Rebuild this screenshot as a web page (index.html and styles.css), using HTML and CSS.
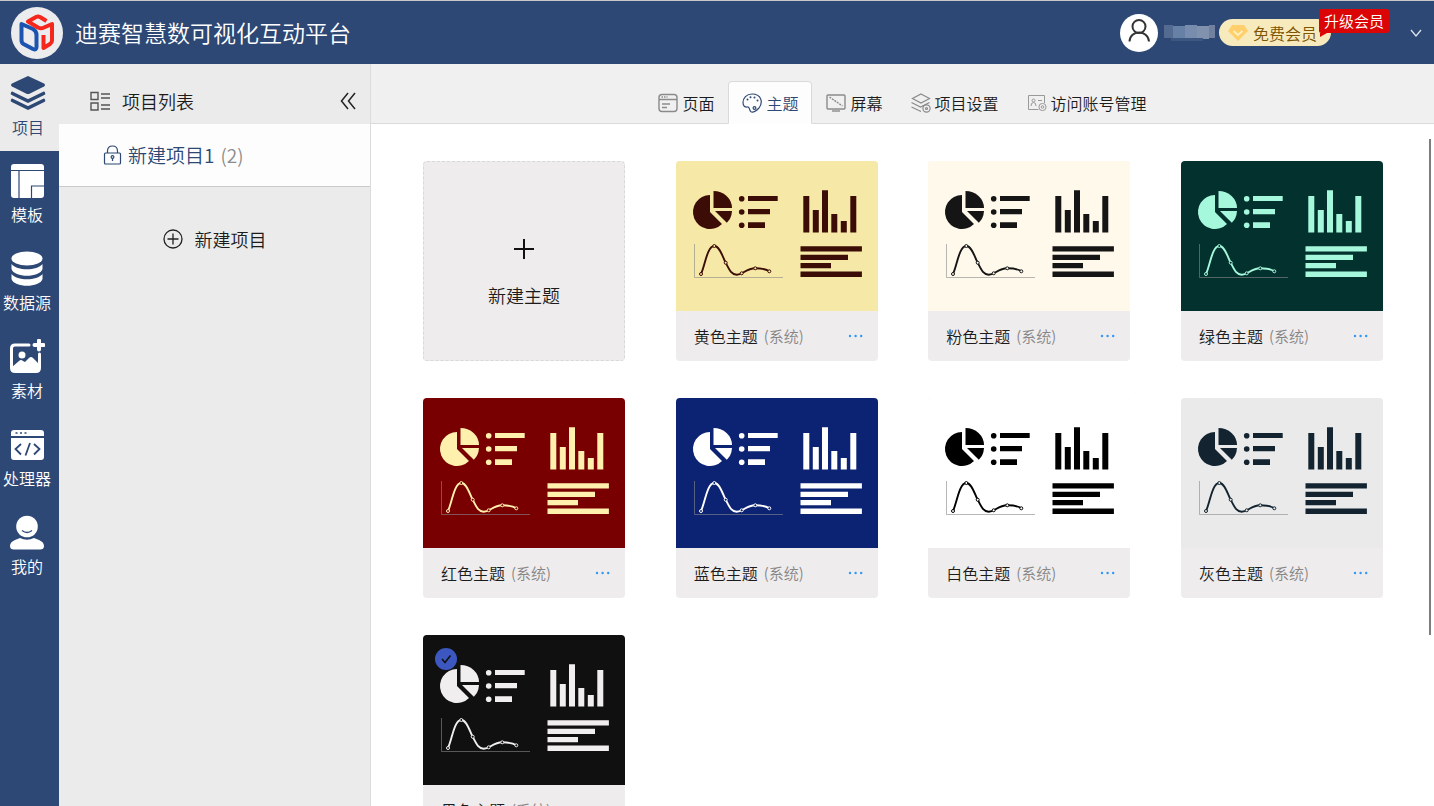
FILE: index.html
```html
<!DOCTYPE html>
<html lang="zh-CN">
<head>
<meta charset="utf-8">
<title>迪赛智慧数可视化互动平台</title>
<link rel="stylesheet" href="styles.css">
</head>
<body>
<svg class="defs" aria-hidden="true">
  <symbol id="charts" viewBox="0 0 202 150">
    <g fill="currentColor">
      <path d="M34 51V34A17 17 0 1 0 46 63Z"/>
      <path d="M37.500 47V30A18.500 17 0 0 1 56 47Z"/>
      <path d="M39 50H56Q55.500 57.500 50.800 61.700Z"/>
      <circle cx="65.700" cy="37.700" r="2.800"/><circle cx="65.700" cy="51" r="2.800"/><circle cx="65.700" cy="64.300" r="2.800"/>
      <path d="M72 35h29.700v5H72zM72 48h22v5.300H72zM72 61.300h17V67H72z"/>
      <path d="M127.300 35h6v36.500h-6zM136.800 49h6v22.500h-6zM146 29.300h6v42.200h-6zM155.300 53h6v18.500h-6zM164.800 60h6v11.500h-6zM174.300 35h6v36.500h-6z"/>
      <path d="M124.500 85.300h61.400v5.200h-61.400zM124.500 93.700H172v5.200h-47.500zM124.500 102H155v5.200h-30.500zM124.500 110.500h61.400v5.500h-61.400z"/>
    </g>
    <path d="M18.500 83v33.500H107" fill="none" stroke="#888" stroke-opacity=".6"/>
    <path d="M25 113C29 105 31 85 38.300 85C44 85 47 97 49.700 101.700C53 108 55 113.700 60.700 113.700C67 113.700 70 107.300 79.300 107.300C85 107.300 90 108 93.300 110.300" fill="none" stroke="currentColor" stroke-width="1.900"/>
    <g class="points"><circle cx="25" cy="113" r="1.500"/><circle cx="38.300" cy="85" r="1.500"/><circle cx="49.700" cy="101.700" r="1.500"/><circle cx="65.700" cy="112.300" r="1.500"/><circle cx="79.300" cy="107.300" r="1.500"/><circle cx="93.300" cy="110.300" r="1.500"/></g>
  </symbol>
  <symbol id="dots" viewBox="0 0 15 15"><g fill="#2f97f5"><circle cx="2" cy="7" r="1.200"/><circle cx="7.600" cy="7" r="1.200"/><circle cx="13.200" cy="7" r="1.200"/></g></symbol>
</svg>

<header class="header">
  <svg class="logo" viewBox="0 0 52 52" aria-hidden="true">
    <circle cx="26" cy="26" r="26" fill="#ececee"/>
    <g fill="none" stroke-width="4" stroke-linejoin="round">
      <path d="M10.500 17L22 22Q25.500 24 25.500 28V40Q25.500 43.500 22 42L12.500 37Q10.500 36 10.500 33Z" stroke="#1c55b0"/>
      <path d="M35.500 14L29 10Q27 9 25 10L17 14.500L27 20.500Q30 22 33 20.500L41 17V33.500Q41 35.500 39 37L32.500 41V28" stroke="#f5261b"/>
    </g>
  </svg>
  <h1 class="title">迪赛智慧数可视化互动平台</h1>
  <div class="account">
    <svg class="avatar" viewBox="0 0 38 38" aria-hidden="true">
      <circle cx="19" cy="19" r="19" fill="#fff"/>
      <g fill="none" stroke="#333" stroke-width="2"><circle cx="19" cy="12.500" r="6.500"/><path d="M9.500 27.500C10 15.500 28 15.500 29 27.500"/></g>
    </svg>
    <svg class="masked-name" viewBox="0 0 52 18" aria-hidden="true">
      <path d="M1 1h9v13H1z" fill="#536b91"/><path d="M10 2h12v14H10z" fill="#6780a5"/><path d="M22 1h12v14H22z" fill="#788cad"/><path d="M34 2h12v13H34z" fill="#8192ae"/><path d="M46 1h6v13h-6z" fill="#6f819e"/><path d="M8 14h32v3H8z" fill="#3d5880"/>
    </svg>
    <div class="member">
      <svg class="gem" viewBox="0 0 20 18" aria-hidden="true"><path d="M4 1H16L20 7L10 17L0 7Z" fill="#ffcf6b"/><path d="M5.500 7L10 11L14.500 7" fill="none" stroke="#fff0bf" stroke-width="1.800"/></svg>
      <span>免费会员</span>
      <button class="upgrade" type="button">升级会员</button>
    </div>
    <button class="icon-button" type="button" aria-label="展开菜单"><svg class="chevron" viewBox="0 0 12 8"><path d="M1 1L6 7L11 1" fill="none" stroke="#dde3ec" stroke-width="1.300"/></svg></button>
  </div>
</header>

<div class="body">
  <nav class="rail">
    <a class="rail-item active" href="#"><svg viewBox="0 0 36 36"><g fill="currentColor"><path d="M18 1L34 8.500Q36 10 34 11.500L20 18.500Q18 19.500 16 18.500L2 11.500Q0 10 2 8.500Z"/></g><path d="M2.500 18.500L18 26L33.500 18.500M2.500 25.500L18 33L33.500 25.500" fill="none" stroke="currentColor" stroke-width="3.600" stroke-linecap="round"/></svg><span>项目</span></a>
    <a class="rail-item" href="#"><svg viewBox="0 0 36 36"><rect x="2" y="1" width="33" height="34" rx="3" fill="currentColor"/><path d="M2 7.500H35M10 7.500V35M35 23H22.500V35" fill="none" stroke="#2d4875" stroke-width="1.200"/></svg><span>模板</span></a>
    <a class="rail-item" href="#"><svg viewBox="0 0 36 36"><g fill="currentColor"><ellipse cx="18" cy="7.500" rx="15.500" ry="7"/><path d="M2.500 13C8 20 28 20 33.500 13V18C31 27 5 27 2.500 18Z"/><path d="M2.500 23C8 30 28 30 33.500 23V28C31 37 5 37 2.500 28Z"/></g></svg><span>数据源</span></a>
    <a class="rail-item" href="#"><svg viewBox="0 0 36 36"><path d="M20 6H6Q2.500 6 2.500 9.500V29Q2.500 32.500 6 32.500H27Q30.500 32.500 30.500 29V15" fill="none" stroke="currentColor" stroke-width="3" stroke-linecap="round"/><circle cx="13" cy="16" r="3.500" fill="currentColor"/><path d="M3 28L10 22Q12 20 14 22L16 23L20 19Q22 17 24 19L31 26V30Q31 33 28 33H5Z" fill="currentColor"/><path d="M30 1.500V10.500M25.500 6H34.500" stroke="currentColor" stroke-width="4" stroke-linecap="round"/></svg><span>素材</span></a>
    <a class="rail-item" href="#"><svg viewBox="0 0 36 36"><path d="M5 3H32Q35 3 35 6V9H2V6Q2 3 5 3ZM2 11H35V30Q35 33 32 33H5Q2 33 2 30Z" fill="currentColor"/><path d="M6.500 6h2M11 6h2M15.500 6h2" stroke="#2d4875" stroke-width="1.600"/><path d="M12 17L6.500 22L12 27.500M25 17L30.500 22L25 27.500M21 16L16.500 28.500" fill="none" stroke="#2d4875" stroke-width="1.800"/></svg><span>处理器</span></a>
    <a class="rail-item" href="#"><svg viewBox="0 0 36 36"><circle cx="18" cy="11.500" r="10.800" fill="currentColor"/><path d="M13 15.500Q18 19.500 23 15.500" fill="none" stroke="#2d4875" stroke-width="1.300"/><path d="M1 31Q1 27 6 25L11 23Q18 26.500 25 23L30 25Q35 27 35 31Q35 34.500 31 34.500H5Q1 34.500 1 31Z" fill="currentColor"/></svg><span>我的</span></a>
  </nav>

  <aside class="projects">
    <div class="projects-head">
      <svg class="list-icon" viewBox="0 0 20 20" aria-hidden="true"><g fill="none" stroke="#555" stroke-width="1.400"><path d="M1 1.500h7v7H1zM1 12h7v7H1zM11 3h9M11 7h9M11 14h9M11 18h9"/></g></svg>
      <h2>项目列表</h2>
      <button class="icon-button collapse" type="button" aria-label="收起"><svg viewBox="0 0 16 18"><path d="M8 1L1.500 9L8 17M15 1L8.500 9L15 17" fill="none" stroke="#222" stroke-width="1.500"/></svg></button>
    </div>
    <a class="project" href="#">
      <svg class="lock" viewBox="0 0 18 20" aria-hidden="true"><g fill="none" stroke="#2d4875" stroke-width="1.200"><rect x="1" y="8" width="16" height="11" rx="1"/><path d="M4 8V6Q4 1 9 1Q14 1 14 6V8"/><circle cx="9" cy="12" r="1.400"/><path d="M9 13.500V16"/></g></svg>
      <span>新建项目1</span><span class="count">(2)</span>
    </a>
    <button class="new-project" type="button">
      <svg viewBox="0 0 20 20" aria-hidden="true"><g fill="none" stroke="#222" stroke-width="1.300"><circle cx="10" cy="10" r="9"/><path d="M10 4.500v11M4.500 10h11"/></g></svg>
      <span>新建项目</span>
    </button>
  </aside>

  <main class="main">
    <nav class="tabs">
      <a class="tab" href="#"><svg viewBox="0 0 20 20"><g fill="none" stroke="#8a8a8a" stroke-width="1.400"><rect x="1" y="1.500" width="18" height="17" rx="3"/><path d="M1 6.500H19M4 11h8M4 14.500h5"/><path d="M3.500 4h6" stroke-dasharray="1.500 1"/></g></svg><span>页面</span></a>
      <a class="tab active" href="#"><svg viewBox="0 0 20 20"><g fill="none" stroke="#2d4875" stroke-width="1.200"><path d="M9 18.800C11 20 13 19 17 15C21 10 20 1 10 1C4.500 1 1 5 1 9.500C1 13 3 14.500 5.500 14C8 13.500 7 17.500 9 18.800Z"/><circle cx="12.500" cy="15" r="1.400"/></g><g fill="#2d4875"><circle cx="5.500" cy="6.500" r="1"/><circle cx="8.500" cy="4.300" r="1"/><circle cx="12.500" cy="4.500" r="1"/><circle cx="15.500" cy="7.500" r="1"/></g></svg><span>主题</span></a>
      <a class="tab" href="#"><svg viewBox="0 0 20 20"><g fill="none" stroke="#8a8a8a" stroke-width="1.400"><rect x="1" y="2" width="18" height="14" rx="1"/><path d="M6 18h8"/><path d="M3.500 4L16.500 13" stroke-dasharray="2 1"/></g></svg><span>屏幕</span></a>
      <a class="tab" href="#"><svg viewBox="0 0 20 20"><g fill="none" stroke="#8a8a8a" stroke-width="1.200"><path d="M10 1L18.500 5.500L10 10L1.500 5.500ZM.5 9.500L9.500 14L18.500 9.500M.5 14L10 18.500"/><circle cx="15.500" cy="15.500" r="3.600"/><circle cx="15.500" cy="15.500" r="1"/></g></svg><span>项目设置</span></a>
      <a class="tab" href="#"><svg viewBox="0 0 20 20"><g fill="none" stroke="#999"><path d="M11.500 16.500H1.500V2.500H17.500V10"/><circle cx="6.500" cy="7.500" r="1.500"/><path d="M4 13Q4 9.500 6.500 9.500Q9 9.500 9 13M11 7.500h4"/><circle cx="15.500" cy="14" r="3.600"/><circle cx="15.500" cy="14" r="1.300"/></g></svg><span>访问账号管理</span></a>
    </nav>
    <section class="themes">
      <button class="card card-new" type="button">
        <svg viewBox="0 0 20 20" aria-hidden="true"><path d="M10 0v20M0 10h20" stroke="#111" stroke-width="2"/></svg>
        <span>新建主题</span>
      </button>
      <article class="card yellow"><svg class="thumb"><use href="#charts"/></svg><div class="caption"><span>黄色主题</span><small>(系统)</small><button class="more" type="button" aria-label="更多"><svg><use href="#dots"/></svg></button></div></article>
      <article class="card pink"><svg class="thumb"><use href="#charts"/></svg><div class="caption"><span>粉色主题</span><small>(系统)</small><button class="more" type="button" aria-label="更多"><svg><use href="#dots"/></svg></button></div></article>
      <article class="card green"><svg class="thumb"><use href="#charts"/></svg><div class="caption"><span>绿色主题</span><small>(系统)</small><button class="more" type="button" aria-label="更多"><svg><use href="#dots"/></svg></button></div></article>
      <article class="card red"><svg class="thumb"><use href="#charts"/></svg><div class="caption"><span>红色主题</span><small>(系统)</small><button class="more" type="button" aria-label="更多"><svg><use href="#dots"/></svg></button></div></article>
      <article class="card blue"><svg class="thumb"><use href="#charts"/></svg><div class="caption"><span>蓝色主题</span><small>(系统)</small><button class="more" type="button" aria-label="更多"><svg><use href="#dots"/></svg></button></div></article>
      <article class="card white"><svg class="thumb"><use href="#charts"/></svg><div class="caption"><span>白色主题</span><small>(系统)</small><button class="more" type="button" aria-label="更多"><svg><use href="#dots"/></svg></button></div></article>
      <article class="card gray"><svg class="thumb"><use href="#charts"/></svg><div class="caption"><span>灰色主题</span><small>(系统)</small><button class="more" type="button" aria-label="更多"><svg><use href="#dots"/></svg></button></div></article>
      <article class="card black"><svg class="thumb"><use href="#charts"/></svg>
        <svg class="selected" viewBox="0 0 22 22"><circle cx="11" cy="11" r="11" fill="#3c58c0"/><path d="M7 11L10 14.500L15.500 7.500" fill="none" stroke="#111" stroke-width="1.600"/></svg>
        <div class="caption"><span>黑色主题</span><small>(系统)</small><button class="more" type="button" aria-label="更多"><svg><use href="#dots"/></svg></button></div></article>
    </section>
    <div class="scroll-thumb"></div>
  </main>
</div>
</body>
</html>
```

FILE: styles.css
```css
* { box-sizing: border-box; }

body {
  margin: 0;
  height: 100vh;
  display: flex;
  flex-direction: column;
  overflow: hidden;
  font-family: "Noto Sans CJK SC", sans-serif;
  font-size: 16px;
  font-weight: 350;
  line-height: 24px;
  color: #1c1c1c;
  background: #fff;
}

a { color: inherit; text-decoration: none; }

button {
  padding: 0;
  border: 0;
  background: none;
  color: inherit;
  font: inherit;
  cursor: pointer;
}

svg { display: block; flex: none; }

.defs { position: absolute; width: 0; height: 0; }

/* Header */
.header {
  flex: none;
  display: flex;
  align-items: center;
  height: 64px;
  padding: 0 6px 0 11px;
  border-top: 1px solid #c8c8c8;
  background: #2d4875;
  color: #fff;
}

.logo { width: 52px; height: 52px; }

.title {
  margin: 0 auto 0 12px;
  padding-bottom: 2px;
  font-size: 23px;
  font-weight: 350;
  line-height: 32px;
}

.account { display: flex; align-items: center; }

.avatar { width: 38px; height: 38px; margin-right: 5px; }

.masked-name { width: 52px; height: 18px; margin-right: 4px; }

.member {
  position: relative;
  display: flex;
  align-items: center;
  gap: 5px;
  height: 27px;
  margin-right: 73px;
  padding: 0 14px 0 9px;
  border-radius: 14px;
  background: #f7ebbe;
  color: #7d5400;
}

.gem { width: 20px; height: 18px; }

.upgrade {
  position: absolute;
  left: 100px;
  top: -10px;
  padding: 0 5px;
  border-radius: 2px;
  background: #dc0505;
  color: #fff;
  font-size: 15px;
  line-height: 24px;
  white-space: nowrap;
}

.upgrade::after {
  content: "";
  position: absolute;
  left: 1px;
  top: 24px;
  border-top: 4px solid #dc0505;
  border-right: 7px solid transparent;
}

.icon-button { padding: 1px; }

.chevron { width: 12px; height: 8px; margin: 0 5px; }

/* Page body */
.body { flex: 1; display: flex; min-height: 0; }

.rail { flex: none; width: 59px; background: #2d4875; color: #fff; }

.rail-item {
  display: flex;
  flex-direction: column;
  align-items: center;
  gap: 3px;
  height: 88px;
  padding: 12px 5px 0 0;
}

.rail-item.active {
  height: 87px;
  padding: 11px 3px 0 0;
  gap: 4px;
  background: #ebebeb;
  color: #2d4875;
}

.rail-item svg { width: 36px; height: 36px; }

.rail-item span { white-space: nowrap; }

.projects {
  flex: none;
  display: flex;
  flex-direction: column;
  width: 312px;
  border-right: 1px solid #dcdcdc;
  background: #ebebeb;
  font-size: 18px;
}

.projects-head {
  display: flex;
  align-items: center;
  height: 60px;
  padding: 14px 13px 0 31px;
}

.projects-head h2 {
  margin: 0 auto 0 12px;
  font-size: 18px;
  font-weight: 350;
}

.list-icon { width: 20px; height: 20px; }

.collapse svg { width: 16px; height: 18px; }

.project {
  display: flex;
  align-items: center;
  height: 63px;
  padding-left: 44px;
  border-bottom: 1px solid #cacaca;
  background: #fdfdfd;
  color: #2d4875;
  font-size: 19px;
}

.lock { width: 19px; height: 20px; margin-right: 6px; }

.count { margin-left: 6px; color: #8c8c8c; }

.new-project {
  display: flex;
  align-items: center;
  align-self: center;
  gap: 12px;
  margin-top: 40px;
}

.new-project svg { width: 20px; height: 20px; }

/* Main */
.main {
  position: relative;
  flex: 1;
  display: flex;
  flex-direction: column;
  min-width: 0;
}

.tabs {
  flex: none;
  display: flex;
  justify-content: center;
  align-items: flex-end;
  height: 60px;
  border-bottom: 1px solid #dadada;
  background: #f0f0f0;
}

.tab {
  display: flex;
  align-items: center;
  gap: 4px;
  height: 43px;
  margin-bottom: -1px;
  padding: 0 13px;
  border: 1px solid transparent;
  border-radius: 4px 4px 0 0;
}

.tab.active {
  border-color: #dadada;
  border-bottom-color: #fdfdfd;
  background: #fdfdfd;
  color: #2d4875;
}

.tab svg { width: 20px; height: 20px; }

.themes {
  flex: 1;
  display: grid;
  grid-template-columns: repeat(4, 202px);
  grid-auto-rows: 200px;
  justify-content: space-between;
  row-gap: 37px;
  min-height: 0;
  padding: 37px 51px 37px 52px;
  overflow: hidden;
}

.card {
  position: relative;
  overflow: hidden;
  border-radius: 4px;
  background: #efeced;
}

.card-new {
  display: flex;
  flex-direction: column;
  align-items: center;
  justify-content: center;
  gap: 24px;
  padding-top: 24px;
  border: 1px dashed #d8d8d8;
  font-size: 18px;
}

.card-new svg { width: 20px; height: 20px; }

.thumb {
  width: 100%;
  height: 150px;
  background: var(--paper);
  color: var(--ink);
}

.points { fill: var(--paper); stroke: var(--ink); stroke-width: 1px; }

.yellow { --paper: #f6e8a6; --ink: #3c0d06; }
.pink { --paper: #fff9ec; --ink: #151515; }
.green { --paper: #03312d; --ink: #a5f8dc; }
.red { --paper: #780000; --ink: #fff0ad; }
.blue { --paper: #0c2373; --ink: #fff; }
.white { --paper: #fff; --ink: #000; }
.gray { --paper: #eaeaea; --ink: #132430; }
.black { --paper: #101010; --ink: #f1eeef; }

.caption {
  display: flex;
  align-items: center;
  height: 50px;
  padding: 0 15px 0 18px;
}

.caption small {
  margin: 0 auto 0 6px;
  color: #858585;
  font-size: 15px;
}

.more svg { width: 15px; height: 15px; }

.selected {
  position: absolute;
  left: 12px;
  top: 13px;
  width: 22px;
  height: 22px;
}

.scroll-thumb {
  position: absolute;
  right: 3px;
  top: 75px;
  width: 2px;
  height: 496px;
  background: #7d7d7d;
}
```
